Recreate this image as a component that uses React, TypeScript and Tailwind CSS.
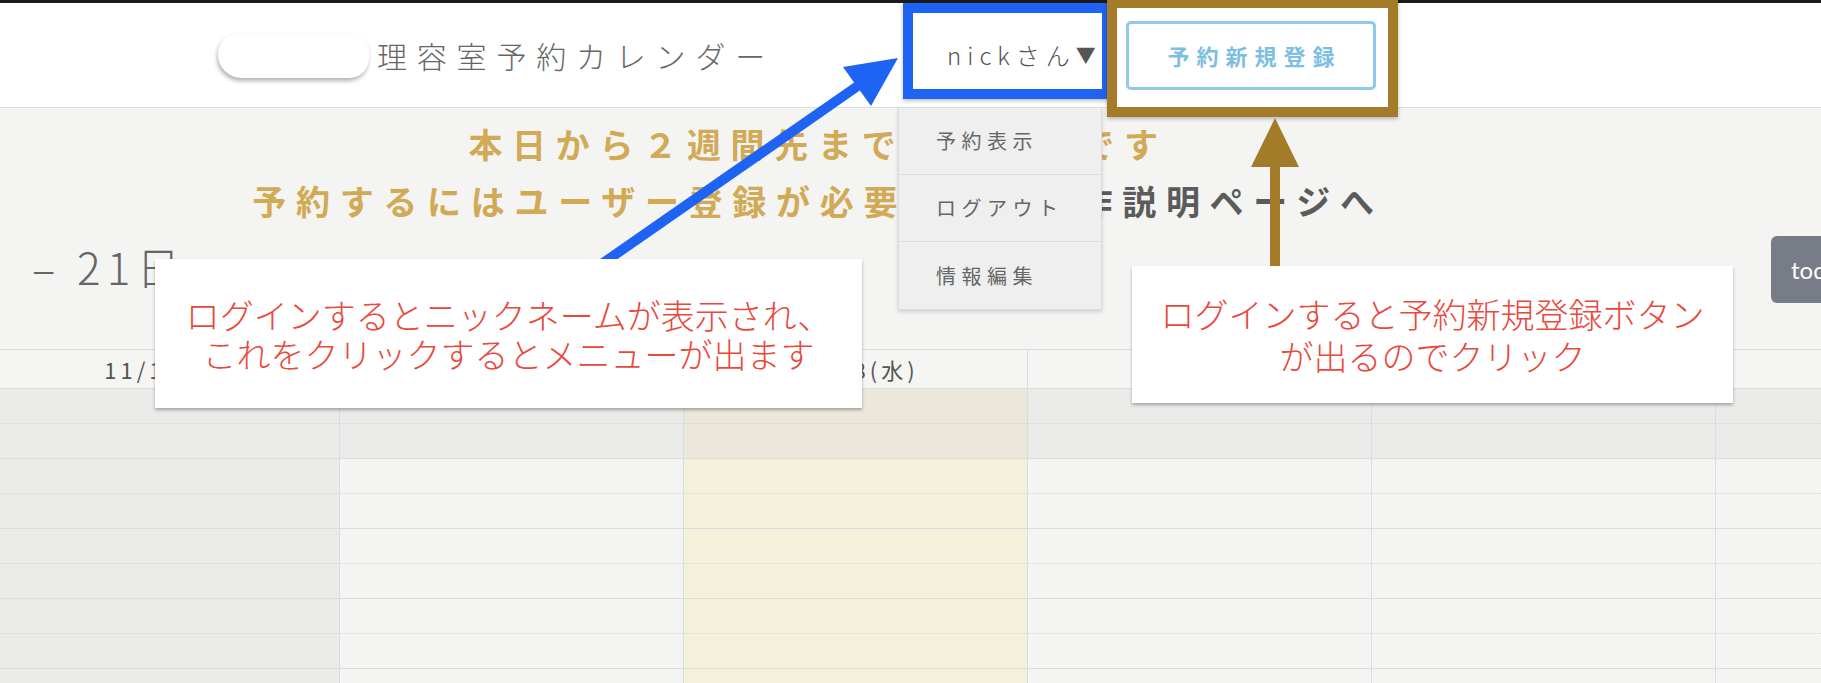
import React from 'react';

type Day = { label: string; closed?: boolean; today?: boolean };

const days: Day[] = [
  { label: '11/16(月)', closed: true },
  { label: '11/17(火)' },
  { label: '11/18(水)', today: true },
  { label: '11/19(木)' },
  { label: '11/20(金)' },
  { label: '11/21(土)' },
];

const slots = [0, 1, 2, 3, 4];

const menuItems = ['予約表示', 'ログアウト', '情報編集'];

const cellBg = (day: Day, i: number) => {
  if (day.today) return i === 0 ? 'bg-[#ebe7da]' : 'bg-[#f3f0dc]';
  if (day.closed || i === 0) return 'bg-[#eaeae8]';
  return 'bg-[#f4f4f2]';
};

const App: React.FC = () => {
  return (
    <div className="relative h-[683px] w-[1821px] overflow-hidden bg-[#f4f4f2] font-['Noto_Sans_CJK_JP',sans-serif]">
      {/* header */}
      <header className="flex h-[108px] items-center border-t-[3px] border-b border-t-[#1a1a1a] border-b-[#dcdcdc] bg-white">
        <div className="ml-[218px] h-[45px] w-[151px] rounded-[22px_18px_20px_24px] bg-white shadow-[-1px_3px_4px_rgba(0,0,0,0.3)]" />
        <h1 className="ml-[8px] w-[526px] text-[30px] font-light leading-none tracking-[9.8px] text-[#666]">
          理容室予約カレンダー
        </h1>
        <div className="flex h-[96px] w-[209px] items-center pl-[44px] text-[24px] font-light tracking-[6px] text-[#555]">
          nickさん<span className="text-[20px] tracking-normal">▼</span>
        </div>
        <button className="ml-[14px] h-[69px] w-[250px] rounded-[5px] border-[3px] border-[#8ecbea] bg-white pl-[7px] text-[22px] font-bold tracking-[7px] text-[#7dbfe2]">
          予約新規登録
        </button>
      </header>

      {/* notice */}
      <div className="w-[1636px] pt-[7px] text-center text-[34px] font-bold leading-[57px] tracking-[9.7px]">
        <p className="text-[#d2a955]">本日から２週間先まで予約可能です</p>
        <p>
          <span className="text-[#d2a955]">予約するにはユーザー登録が必要です。</span>
          <span className="text-[#5b5b5b]">操作説明ページへ</span>
        </p>
      </div>

      {/* range + today */}
      <div className="mt-[7px] flex h-[67px] items-center">
        <h2 className="mb-[8px] pl-[32px] text-[44px] font-light leading-none tracking-[6px] text-[#666]">– 21日</h2>
        <div className="flex-1" />
        <button className="mr-[-70px] h-[67px] w-[120px] shrink-0 rounded-[6px] bg-[#777c86] pl-[20px] text-left font-['Lato',sans-serif] text-[24px] text-white">
          today
        </button>
      </div>

      {/* calendar */}
      <div className="ml-[-4px] mt-[46px] flex">
        {days.map((day) => (
          <div key={day.label} className="w-[344px] shrink-0 border-r border-[#dcdcdc]">
            <div className="flex h-[40px] items-center justify-center border-y border-[#dcdcdc] bg-[#f5f5f3] text-[22px] tracking-[4px] text-[#555]">
              {day.label}
            </div>
            {slots.map((i) => (
              <div key={i} className={`h-[70px] border-b border-[#dcdcdc] ${cellBg(day, i)}`}>
                <div className="h-[35px] border-b border-dotted border-[#d8d8d8]" />
              </div>
            ))}
          </div>
        ))}
      </div>

      {/* dropdown */}
      <ul className="absolute left-[898px] top-[107px] w-[204px] border border-[#dcdcdc] bg-[#efefef] shadow-[0_2px_4px_rgba(0,0,0,0.15)]">
        {menuItems.map((t) => (
          <li
            key={t}
            className="flex h-[67px] items-center border-b border-[#dcdcdc] pl-[37px] text-[20px] tracking-[5.5px] text-[#666] last:border-b-0"
          >
            {t}
          </li>
        ))}
      </ul>

      {/* annotation frames */}
      <div className="absolute left-[903px] top-[3px] h-[96px] w-[209px] border-[10px] border-[#1f63f4] shadow-[0_2px_4px_rgba(0,0,0,0.25)]" />
      <div className="absolute left-[1107px] top-0 h-[117px] w-[291px] border-[10px] border-t-[8px] border-[#a47b29] shadow-[0_2px_4px_rgba(0,0,0,0.25)]" />

      <svg className="pointer-events-none absolute left-0 top-0" width="1821" height="683">
        <line x1="560" y1="293" x2="862" y2="83" stroke="#1f63f4" strokeWidth="10" />
        <polygon points="898,58 843,67 871,106" fill="#1f63f4" />
        <rect x="1270" y="160" width="10" height="110" fill="#a47b29" />
        <polygon points="1275,118 1251,167 1299,167" fill="#a47b29" />
      </svg>

      {/* callouts */}
      <div className="absolute left-[155px] top-[259px] flex h-[149px] w-[707px] items-center justify-center bg-white text-center text-[34px] font-light leading-[39px] text-[#e8493c] shadow-[0_2px_3px_rgba(0,0,0,0.3)]">
        <p>
          ログインするとニックネームが表示され、
          <br />
          これをクリックするとメニューが出ます
        </p>
      </div>
      <div className="absolute left-[1132px] top-[266px] flex h-[137px] w-[601px] items-center justify-center bg-white text-center text-[34px] font-light leading-[42px] text-[#e8493c] shadow-[0_2px_3px_rgba(0,0,0,0.3)]">
        <p>
          ログインすると予約新規登録ボタン
          <br />
          が出るのでクリック
        </p>
      </div>
    </div>
  );
};

export default App;
